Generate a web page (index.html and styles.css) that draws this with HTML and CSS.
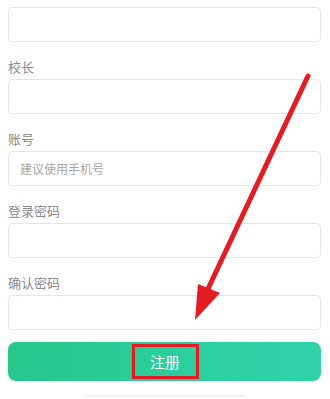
FILE: index.html
```html
<!DOCTYPE html>
<html lang="zh">
<head>
    <meta charset="UTF-8">
    <meta name="viewport" content="width=device-width, initial-scale=1.0">
    <title>注册</title>
    <link rel="stylesheet" href="styles.css">
</head>
<body>
    <div class="form">
        <input type="text" class="field">

        <label class="label">校长</label>
        <input type="text" class="field">

        <label class="label">账号</label>
        <input type="text" class="field" placeholder="建议使用手机号">

        <label class="label">登录密码</label>
        <input type="password" class="field">

        <label class="label">确认密码</label>
        <input type="password" class="field">

        <button class="submit"><span class="mark">注册</span></button>
        <div class="foot"></div>
    </div>

    <!-- annotation arrow -->
    <svg class="arrow" width="330" height="399" viewBox="0 0 330 399">
        <line x1="308" y1="76" x2="207" y2="291" stroke="#e41b22" stroke-width="5" stroke-linecap="round"/>
        <polygon points="195,320 198,284 220,293" fill="#e41b22"/>
    </svg>
</body>
</html>
```

FILE: styles.css
```css
*{
    margin:0;
    padding:0;
    box-sizing:border-box;
}

body{
    width:330px;
    height:399px;
    overflow:hidden;
    background:#fff;
    font-family:"Noto Sans CJK SC", "Liberation Sans", sans-serif;
    position:relative;
}

.form{
    display:flex;
    flex-direction:column;
    padding:7px 9px 0 8px;
}

.label{
    display:block;
    height:20px;
    line-height:20px;
    margin-top:15px;
    margin-bottom:2px;
    font-size:13px;
    color:#8a8a8f;
}

.field{
    width:100%;
    height:35px;
    border:1px solid #e6e6e6;
    border-radius:4px;
    padding:0 11px;
    font-size:12px;
    font-family:inherit;
    color:#333;
    outline:none;
    background:#fff;
}

.field::placeholder{
    color:#a6a6a6;
}

.submit{
    margin-top:12px;
    height:39px;
    width:313px;
    border:none;
    border-radius:8px;
    background:linear-gradient(90deg, #27c78c, #2fd4ab);
    display:flex;
    justify-content:center;
    align-items:center;
    font-family:inherit;
    cursor:pointer;
}

.mark{
    display:flex;
    align-items:center;
    justify-content:center;
    width:67px;
    height:35px;
    margin-left:1px;
    border:3px solid #e31c24;
    color:#fff;
    font-size:15px;
}

.foot{
    margin:14px auto 0;
    width:160px;
    height:2px;
    background:#f2f2f2;
}

.arrow{
    position:absolute;
    left:0;
    top:0;
    pointer-events:none;
}
```
